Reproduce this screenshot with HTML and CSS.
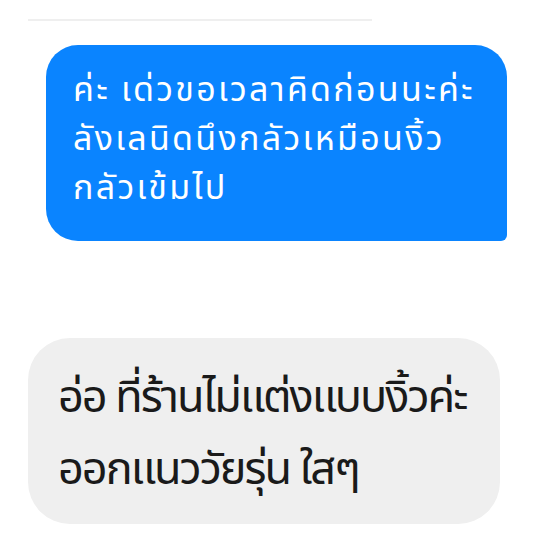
FILE: index.html
```html
<!DOCTYPE html>
<html lang="th">
<head>
    <meta charset="UTF-8">
    <title>Chat</title>
    <link rel="stylesheet" href="styles.css">
</head>
<body>
    <div class="chat">
        <div class="divider"></div>

        <div class="bubble sent">
            <p>ค่ะ เด่วขอเวลาคิดก่อนนะค่ะ</p>
            <p>ลังเลนิดนึงกลัวเหมือนงิ้ว</p>
            <p>กลัวเข้มไป</p>
        </div>

        <div class="bubble received">
            <p>อ่อ ที่ร้านไม่แต่งแบบงิ้วค่ะ</p>
            <p>ออกแนววัยรุ่น ใสๆ</p>
        </div>
    </div>
</body>
</html>
```

FILE: styles.css
```css
body {
    margin: 0;
    background: #fff;
    font-family: "Noto Sans Thai", "Noto Sans Thai UI", "Noto Sans", sans-serif;
}

.chat {
    display: flex;
    flex-direction: column;
    align-items: flex-start;
    padding: 19px 0 0 28px;
}

.divider {
    width: 344px;
    height: 2px;
    background: #efefef;
}

.bubble p {
    margin: 0;
    white-space: nowrap;
}

.sent {
    box-sizing: border-box;
    margin: 24px 0 0 18px;
    width: 461px;
    height: 196px;
    padding: 21px 27px;
    background: #0a84ff;
    color: #fff;
    border-radius: 32px 32px 6px 32px;
    font-size: 34px;
    letter-spacing: 2.3px;
    line-height: 49px;
}

.received {
    box-sizing: border-box;
    margin-top: 97px;
    width: 472px;
    height: 186px;
    padding: 24px 30px;
    background: #efefef;
    color: #1a1a1a;
    border-radius: 42px;
    font-size: 45px;
    letter-spacing: -2px;
    line-height: 72px;
}
```
